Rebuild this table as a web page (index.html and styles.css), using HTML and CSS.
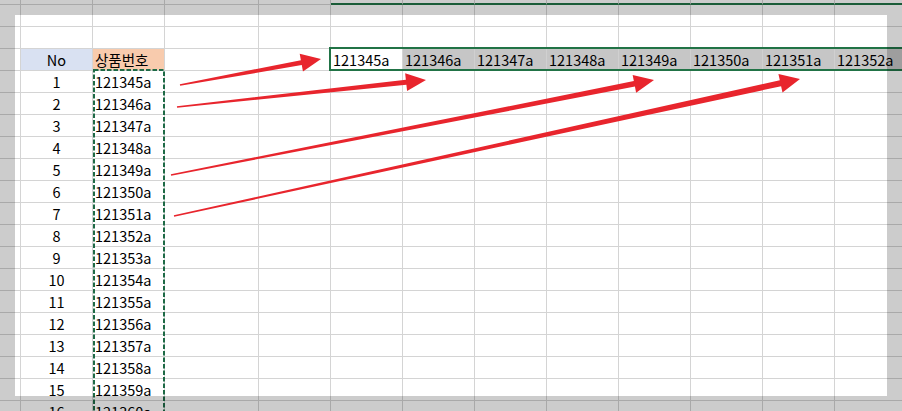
FILE: index.html
```html
<!DOCTYPE html>
<html lang="ko">
<head>
<meta charset="utf-8">
<title>Sheet</title>
<link rel="stylesheet" href="styles.css">
</head>
<body>
<div class="sheet">
  <div class="row top">
    <span></span><span></span><span></span><span></span><span></span>
    <span class="sel-edge"></span><span class="sel-edge"></span><span class="sel-edge"></span><span class="sel-edge"></span><span class="sel-edge"></span><span class="sel-edge"></span><span class="sel-edge"></span><span class="sel-edge"></span>
  </div>
  <div class="row"><span></span><span></span><span></span><span></span><span></span><span></span><span></span><span></span><span></span><span></span><span></span><span></span><span></span></div>
  <div class="row"><span></span><span></span><span></span><span></span><span></span><span></span><span></span><span></span><span></span><span></span><span></span><span></span><span></span></div>
  <div class="row">
    <span></span><span class="num hd-no">No</span><span class="txt hd-code">상품번호</span><span></span><span></span>
    <span class="txt">121345a</span><span class="txt hl">121346a</span><span class="txt hl">121347a</span><span class="txt hl">121348a</span><span class="txt hl">121349a</span><span class="txt hl">121350a</span><span class="txt hl">121351a</span><span class="txt hl">121352a</span>
  </div>
  <div class="row"><span></span><span class="num">1</span><span class="txt">121345a</span><span></span><span></span><span></span><span></span><span></span><span></span><span></span><span></span><span></span><span></span></div>
  <div class="row"><span></span><span class="num">2</span><span class="txt">121346a</span><span></span><span></span><span></span><span></span><span></span><span></span><span></span><span></span><span></span><span></span></div>
  <div class="row"><span></span><span class="num">3</span><span class="txt">121347a</span><span></span><span></span><span></span><span></span><span></span><span></span><span></span><span></span><span></span><span></span></div>
  <div class="row"><span></span><span class="num">4</span><span class="txt">121348a</span><span></span><span></span><span></span><span></span><span></span><span></span><span></span><span></span><span></span><span></span></div>
  <div class="row"><span></span><span class="num">5</span><span class="txt">121349a</span><span></span><span></span><span></span><span></span><span></span><span></span><span></span><span></span><span></span><span></span></div>
  <div class="row"><span></span><span class="num">6</span><span class="txt">121350a</span><span></span><span></span><span></span><span></span><span></span><span></span><span></span><span></span><span></span><span></span></div>
  <div class="row"><span></span><span class="num">7</span><span class="txt">121351a</span><span></span><span></span><span></span><span></span><span></span><span></span><span></span><span></span><span></span><span></span></div>
  <div class="row"><span></span><span class="num">8</span><span class="txt">121352a</span><span></span><span></span><span></span><span></span><span></span><span></span><span></span><span></span><span></span><span></span></div>
  <div class="row"><span></span><span class="num">9</span><span class="txt">121353a</span><span></span><span></span><span></span><span></span><span></span><span></span><span></span><span></span><span></span><span></span></div>
  <div class="row"><span></span><span class="num">10</span><span class="txt">121354a</span><span></span><span></span><span></span><span></span><span></span><span></span><span></span><span></span><span></span><span></span></div>
  <div class="row"><span></span><span class="num">11</span><span class="txt">121355a</span><span></span><span></span><span></span><span></span><span></span><span></span><span></span><span></span><span></span><span></span></div>
  <div class="row"><span></span><span class="num">12</span><span class="txt">121356a</span><span></span><span></span><span></span><span></span><span></span><span></span><span></span><span></span><span></span><span></span></div>
  <div class="row"><span></span><span class="num">13</span><span class="txt">121357a</span><span></span><span></span><span></span><span></span><span></span><span></span><span></span><span></span><span></span><span></span></div>
  <div class="row"><span></span><span class="num">14</span><span class="txt">121358a</span><span></span><span></span><span></span><span></span><span></span><span></span><span></span><span></span><span></span><span></span></div>
  <div class="row"><span></span><span class="num">15</span><span class="txt">121359a</span><span></span><span></span><span></span><span></span><span></span><span></span><span></span><span></span><span></span><span></span></div>
  <div class="row"><span></span><span class="num">16</span><span class="txt">121360a</span><span></span><span></span><span></span><span></span><span></span><span></span><span></span><span></span><span></span><span></span></div>

  <div class="range-box"></div>

  <svg class="marks" width="902" height="411" viewBox="0 0 902 411" xmlns="http://www.w3.org/2000/svg">
    <rect x="94" y="70" width="70" height="500" fill="none" stroke="#1e6a46" stroke-width="2" stroke-dasharray="4.5 2"/>
    <g fill="#e8252d">
      <polygon points="179.85,84.21 300.88,60.17 299.70,53.78 321,59 302.96,71.48 301.78,65.09 180.15,85.79"/>
      <polygon points="176.91,106.20 405.85,79.67 405.15,73.21 426,80 407.09,91.11 406.39,84.65 177.09,107.80"/>
      <polygon points="170.85,174.22 633.84,81.11 632.64,75.03 654,80 636.12,92.69 634.92,86.61 171.15,175.78"/>
      <polygon points="173.83,215.22 779.82,80.35 778.43,74.00 800,79 782.49,92.56 781.10,86.21 174.17,216.78"/>
    </g>
  </svg>

  <div class="focus"></div>
</div>
</body>
</html>
```

FILE: styles.css
```css
* { box-sizing: border-box; }

html, body {
  margin: 0;
  padding: 0;
  width: 902px;
  height: 411px;
  overflow: hidden;
  background: #ffffff;
}

.sheet {
  position: relative;
  width: 902px;
  height: 411px;
  overflow: hidden;
  font-family: "Noto Sans CJK KR", "Noto Sans", sans-serif;
  font-size: 14.5px;
  color: #000;
}

.row {
  display: grid;
  grid-template-columns: 21px 72px 72px 94px 72px repeat(8, 72px);
  height: 22px;
}

.row.top { height: 5px; }

.row span {
  display: block;
  border-right: 1px solid #d4d4d4;
  border-bottom: 1px solid #d4d4d4;
  line-height: 22px;
  white-space: nowrap;
  overflow: hidden;
}

.row span.sel-edge {
  border-bottom: 2px solid #217346;
}

.num { text-align: center; }

.txt { padding-left: 2px; }

.hd-no { background: #d9e1f2; }
.hd-code { background: #f8cbad; }

.row span.hl {
  background: #c6c6c6;
  border-right-color: #d0d0d0;
}

.range-box {
  position: absolute;
  left: 329px;
  top: 47px;
  width: 620px;
  height: 24px;
  border: 2px solid #217346;
}

.marks {
  position: absolute;
  left: 0;
  top: 0;
}

.focus {
  position: absolute;
  left: 15px;
  top: 15px;
  width: 872px;
  height: 381px;
  box-shadow: 0 0 0 2000px rgba(0, 0, 0, 0.2);
}
```
